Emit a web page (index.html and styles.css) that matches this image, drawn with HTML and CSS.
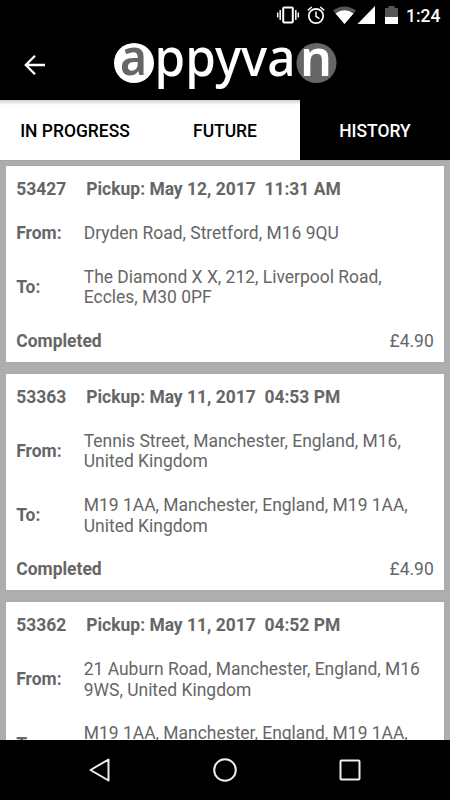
FILE: index.html
```html
<!DOCTYPE html>
<html lang="en">
<head>
<meta charset="utf-8">
<meta name="viewport" content="width=device-width">
<title>appyvan</title>
<link rel="stylesheet" href="styles.css">
</head>
<body>
<div class="screen">
  <header class="top">
    <div class="status">
      <svg class="status-icons" width="138" height="32" viewBox="0 0 138 32" fill="none">
        <g stroke="#fff" stroke-width="1.5">
          <rect x="10.200" y="7.500" width="9.600" height="15" rx="1" stroke-width="2"/>
          <path d="M7.200 10v10M4.700 12.500v5M22.800 10v10M25.300 12.500v5"/>
          <circle cx="43" cy="16" r="7.200" stroke-width="1.700"/>
          <path d="M43 11.500v5l3.500 2.200M34.800 10.300l4-3.300M51.200 10.300l-4-3.300"/>
        </g>
        <path fill="#555" d="M60 10.500Q71.500 2.500 83 10.500L71.500 24Z"/>
        <path fill="#fff" d="M62.500 13.500Q71.500 7.200 80.500 13.500L71.500 24Z"/>
        <path fill="#fff" d="M102 6v18H84.500z"/>
        <path fill="#555" d="M112 8h3.500V6h6v2h3.500v9h-13z"/>
        <path fill="#fff" d="M112 17h13v7h-13z"/>
      </svg>
      <span class="clock">1:24</span>
    </div>
    <div class="appbar">
      <svg class="back" width="22" height="22" viewBox="0 0 22 22" fill="none" stroke="#fff" stroke-width="2.300"><path d="M21 11H3M11 1.800L1.800 11l9.200 9.200"/></svg>
      <svg class="logo" width="230" height="60" viewBox="110 33 230 60">
        <circle cx="134" cy="63" r="20" fill="#fff"/>
        <circle cx="316.500" cy="63" r="20" fill="#666"/>
        <text class="mark" x="120" y="75" fill="#666" textLength="27" lengthAdjust="spacingAndGlyphs">a</text>
        <text class="word" x="154.500" y="75.700" textLength="141" lengthAdjust="spacingAndGlyphs">ppyva</text>
        <text class="mark" x="300" y="75.700" fill="#fff" textLength="32" lengthAdjust="spacingAndGlyphs">n</text>
      </svg>
    </div>
  </header>
  <nav class="tabs">
    <div class="tab">IN PROGRESS</div>
    <div class="tab">FUTURE</div>
    <div class="tab active">HISTORY</div>
  </nav>
  <main class="list">
    <article class="card">
      <div class="row head"><span class="id">53427</span><span>Pickup: May 12, 2017&nbsp; 11:31 AM</span></div>
      <div class="row"><span class="label">From:</span><span>Dryden Road, Stretford, M16 9QU</span></div>
      <div class="row"><span class="label">To:</span><span>The Diamond X X, 212, Liverpool Road,<br>Eccles, M30 0PF</span></div>
      <div class="row foot"><b>Completed</b><span>£4.90</span></div>
    </article>
    <article class="card">
      <div class="row head"><span class="id">53363</span><span>Pickup: May 11, 2017&nbsp; 04:53 PM</span></div>
      <div class="row"><span class="label">From:</span><span>Tennis Street, Manchester, England, M16,<br>United Kingdom</span></div>
      <div class="row"><span class="label">To:</span><span>M19 1AA, Manchester, England, M19 1AA,<br>United Kingdom</span></div>
      <div class="row foot"><b>Completed</b><span>£4.90</span></div>
    </article>
    <article class="card">
      <div class="row head"><span class="id">53362</span><span>Pickup: May 11, 2017&nbsp; 04:52 PM</span></div>
      <div class="row"><span class="label">From:</span><span>21 Auburn Road, Manchester, England, M16<br>9WS, United Kingdom</span></div>
      <div class="row"><span class="label">To:</span><span>M19 1AA, Manchester, England, M19 1AA,<br>United Kingdom</span></div>
    </article>
  </main>
  <footer class="navbar">
    <svg width="24" height="26" viewBox="0 0 24 26" fill="none" stroke="#eee" stroke-width="2" stroke-linejoin="round"><path d="M20.500 2.500v21L2.500 13z"/></svg>
    <svg width="26" height="26" viewBox="0 0 26 26" fill="none" stroke="#eee" stroke-width="2"><circle cx="13" cy="13" r="10.800"/></svg>
    <svg width="24" height="26" viewBox="0 0 24 26" fill="none" stroke="#eee" stroke-width="2"><rect x="2.500" y="3.500" width="19" height="19" rx="1"/></svg>
  </footer>
</div>
</body>
</html>
```
FILE: styles.css
```css
* { box-sizing: border-box; }
body { margin: 0; font-family: Roboto, sans-serif; font-size: 17.47px; line-height: 20.5px; }
.screen { width: 450px; height: 800px; display: flex; flex-direction: column; overflow: hidden; background: #aeaeae; }
.top { flex: 0 0 100px; background: #000; }
.status { height: 32px; display: flex; justify-content: flex-end; align-items: center; padding-right: 10px; color: #fff; }
.status-icons { margin-right: -5px; }
.clock { width: 34px; font-weight: 500; white-space: nowrap; }
.appbar { display: flex; align-items: center; height: 66px; padding-left: 24px; }
.logo { margin-left: 64px; margin-top: -4px; overflow: visible; }
.mark, .word { font-family: "Noto Sans", sans-serif; font-size: 52px; }
.mark { font-size: 51px; font-weight: 600; }
.word { font-weight: 500; fill: #fff; }
.tabs { flex: 0 0 60px; display: grid; grid-template-columns: repeat(3, 1fr); background: linear-gradient(#cfcfcf, #fff 5px); }
.tab { display: flex; align-items: center; justify-content: center; padding-top: 2px; font-weight: 500; color: #000; }
.tab.active { background: #000; color: #fff; }
.list { flex: 1; min-height: 0; overflow: hidden; padding: 5.4px 6.25px 0; display: flex; flex-direction: column; gap: 12.5px; border-top: 1px solid #a4a4a4; }
.card { flex: none; background: #fff; color: #666; box-shadow: 0 0 1px #999; }
.row { display: flex; align-items: center; padding: 11.65px 10px; white-space: nowrap; }
.head { padding-top: 12.95px; font-weight: 700; }
.id { width: 70px; }
.label { width: 67.5px; font-weight: 700; }
.foot { justify-content: space-between; padding-bottom: 9.95px; }
.navbar { flex: 0 0 60px; background: #000; display: flex; align-items: center; justify-content: space-between; padding: 0 88px; }
```
